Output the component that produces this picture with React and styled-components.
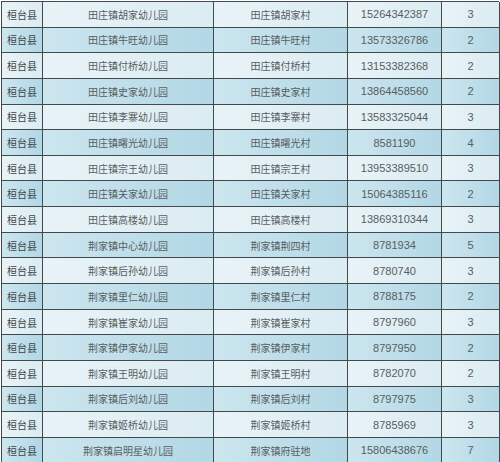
import React from "react";
import styled, { createGlobalStyle } from "styled-components";

const GlobalStyle = createGlobalStyle`
    html, body {
        margin: 0;
        padding: 0;
        background: #ffffff;
    }
    body {
        font-family: "Noto Sans CJK SC", "Liberation Sans", sans-serif;
    }
`;

const StyledSheet = styled.div`
    display: grid;
    grid-template-columns: 41px 171px 134px 94px 58px;
    grid-auto-rows: 25.65px;
    width: 498px;
    margin: 1px 0 0 1px;
    border-top: 1px solid #434a4d;
    border-left: 1px solid #434a4d;
    box-sizing: border-box;
`;

const StyledCell = styled.div`
    display: flex;
    align-items: center;
    justify-content: center;
    box-sizing: border-box;
    border-right: 1px solid #434a4d;
    border-bottom: 1px solid #434a4d;
    background: ${(props) =>
        props.$dark
            ? "linear-gradient(to right, #cce6ef, #b2d7e5)"
            : "linear-gradient(to right, #e8f3f7, #dbecf2)"};
    color: ${(props) => (props.$strong ? "#3e4345" : "#585d60")};
    font-family: ${(props) =>
        props.$number
            ? `"Liberation Sans", Arial, sans-serif`
            : `"Noto Sans CJK SC", sans-serif`};
    font-size: ${(props) => (props.$number ? "11px" : "10px")};
    font-weight: 400;
    white-space: nowrap;
    overflow: hidden;
`;

const rows = [
    ["田庄镇胡家幼儿园", "田庄镇胡家村", "15264342387", "3"],
    ["田庄镇牛旺幼儿园", "田庄镇牛旺村", "13573326786", "2"],
    ["田庄镇付桥幼儿园", "田庄镇付桥村", "13153382368", "2"],
    ["田庄镇史家幼儿园", "田庄镇史家村", "13864458560", "2"],
    ["田庄镇李寨幼儿园", "田庄镇李寨村", "13583325044", "3"],
    ["田庄镇曙光幼儿园", "田庄镇曙光村", "8581190", "4"],
    ["田庄镇宗王幼儿园", "田庄镇宗王村", "13953389510", "3"],
    ["田庄镇关家幼儿园", "田庄镇关家村", "15064385116", "2"],
    ["田庄镇高楼幼儿园", "田庄镇高楼村", "13869310344", "3"],
    ["荆家镇中心幼儿园", "荆家镇荆四村", "8781934", "5"],
    ["荆家镇后孙幼儿园", "荆家镇后孙村", "8780740", "3"],
    ["荆家镇里仁幼儿园", "荆家镇里仁村", "8788175", "2"],
    ["荆家镇崔家幼儿园", "荆家镇崔家村", "8797960", "3"],
    ["荆家镇伊家幼儿园", "荆家镇伊家村", "8797950", "2"],
    ["荆家镇王明幼儿园", "荆家镇王明村", "8782070", "2"],
    ["荆家镇后刘幼儿园", "荆家镇后刘村", "8797975", "3"],
    ["荆家镇姬桥幼儿园", "荆家镇姬桥村", "8785969", "3"],
    ["荆家镇启明星幼儿园", "荆家镇府驻地", "15806438676", "7"],
];

const App = () => {
    return (
        <>
            <GlobalStyle />
            <StyledSheet>
                {rows.map((item, index) => {
                    const dark = index % 2 === 1;
                    return (
                        <React.Fragment key={index}>
                            <StyledCell $dark={dark} $strong>
                                桓台县
                            </StyledCell>
                            <StyledCell $dark={dark}>{item[0]}</StyledCell>
                            <StyledCell $dark={dark}>{item[1]}</StyledCell>
                            <StyledCell $dark={dark} $number>
                                {item[2]}
                            </StyledCell>
                            <StyledCell $dark={dark} $number>
                                {item[3]}
                            </StyledCell>
                        </React.Fragment>
                    );
                })}
            </StyledSheet>
        </>
    );
};

export default App;
